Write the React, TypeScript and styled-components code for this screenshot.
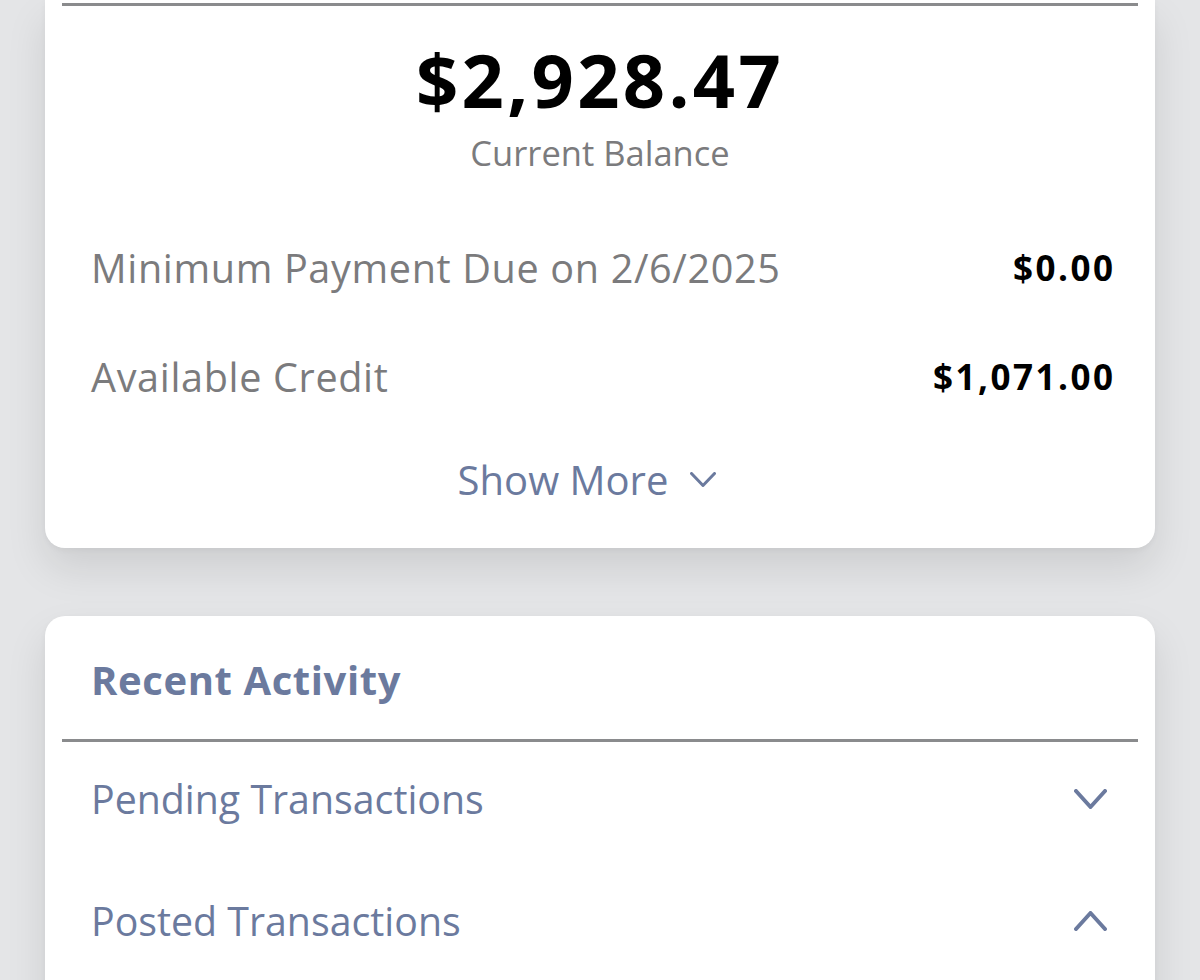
import React from "react";
import styled, { createGlobalStyle } from "styled-components";

const Global = createGlobalStyle`
  html, body { margin: 0; padding: 0; background: #e4e5e7; }
  body { font-family: "Open Sans", "Noto Sans", sans-serif; -webkit-font-smoothing: antialiased; }
`;

const Page = styled.div`
  width: 1200px;
  height: 980px;
  overflow: hidden;
  box-sizing: border-box;
  padding: 0 45px;
  display: flex;
  flex-direction: column;
  gap: 68px;
  background: #e4e5e7;
`;

const Card = styled.section<{ $cutTop?: boolean }>`
  background: #fff;
  border-radius: ${(p) => (p.$cutTop ? "0 0 20px 20px" : "20px 20px 0 0")};
  box-shadow: 0 20px 40px rgba(0, 0, 0, 0.1), 0 2px 6px rgba(0, 0, 0, 0.04);
  display: flex;
  flex-direction: column;
  flex-shrink: 0;
`;

const Rule = styled.div<{ $top?: number }>`
  height: 3px;
  margin: ${(p) => p.$top ?? 0}px 17px 0;
  background: #8a8b8d;
`;

const Balance = styled.div`
  margin-top: 34px;
  text-align: center;
  font-size: 74px;
  line-height: 80px;
  font-weight: 700;
  color: #000;
  letter-spacing: 3.3px;
`;

const BalanceLabel = styled.div`
  margin-top: 13px;
  text-align: center;
  font-size: 34.5px;
  line-height: 40px;
  color: #7b7b7d;
`;

const Rows = styled.div`
  margin-top: 40px;
  display: flex;
  flex-direction: column;
`;

const InfoRow = styled.div`
  height: 109px;
  display: flex;
  align-items: center;
  justify-content: space-between;
  padding: 0 42px 0 46px;
`;

const Label = styled.span`
  font-size: 39.6px;
  line-height: 50px;
  letter-spacing: 0.65px;
  color: #7b7b7d;
`;

const Value = styled.span`
  font-size: 35px;
  font-weight: 700;
  letter-spacing: 2.5px;
  margin-right: -2.5px;
  color: #000;
`;

const ShowMore = styled.button`
  margin: 23px auto 44px;
  height: 50px;
  display: flex;
  align-items: center;
  gap: 22px;
  border: 0;
  background: none;
  padding: 0 26px 0 0;
  font-family: inherit;
  font-size: 40px;
  color: #6b7a9e;
  cursor: pointer;
`;

const Header = styled.h2`
  margin: 0;
  height: 123px;
  box-sizing: border-box;
  padding: 4px 46px 0;
  display: flex;
  align-items: center;
  font-size: 40px;
  font-weight: 700;
  color: #6b7a9e;
  letter-spacing: 0.6px;
`;

const List = styled.div`
  display: flex;
  flex-direction: column;
  gap: 8px;
  padding-bottom: 60px;
`;

const AccordionRow = styled.div`
  height: 114px;
  display: flex;
  align-items: center;
  justify-content: space-between;
  padding: 0 48px 0 46px;
`;

const RowTitle = styled.span`
  font-size: 39.3px;
  color: #6b7a9e;
`;

const Chevron = ({ up, w, h, sw }: { up?: boolean; w: number; h: number; sw: number }) => (
  <svg width={w} height={h + sw} viewBox={`0 0 ${w} ${h + sw}`} fill="none">
    <polyline
      points={
        up
          ? `${sw / 2},${h + sw / 2} ${w / 2},${sw / 2} ${w - sw / 2},${h + sw / 2}`
          : `${sw / 2},${sw / 2} ${w / 2},${h + sw / 2} ${w - sw / 2},${sw / 2}`
      }
      stroke="#6b7a9e"
      strokeWidth={sw}
      strokeLinecap="round"
      strokeLinejoin="round"
    />
  </svg>
);

export default function App() {
  return (
    <>
      <Global />
      <Page>
        <Card $cutTop>
          <Rule $top={3} />
          <Balance>$2,928.47</Balance>
          <BalanceLabel>Current Balance</BalanceLabel>
          <Rows>
            <InfoRow>
              <Label>Minimum Payment Due on 2/6/2025</Label>
              <Value>$0.00</Value>
            </InfoRow>
            <InfoRow>
              <Label>Available Credit</Label>
              <Value>$1,071.00</Value>
            </InfoRow>
          </Rows>
          <ShowMore>
            Show More
            <Chevron w={26} h={12} sw={3} />
          </ShowMore>
        </Card>
        <Card>
          <Header>Recent Activity</Header>
          <Rule />
          <List>
            <AccordionRow>
              <RowTitle>Pending Transactions</RowTitle>
              <Chevron w={33} h={16} sw={4} />
            </AccordionRow>
            <AccordionRow>
              <RowTitle>Posted Transactions</RowTitle>
              <Chevron up w={33} h={16} sw={4} />
            </AccordionRow>
          </List>
        </Card>
      </Page>
    </>
  );
}
